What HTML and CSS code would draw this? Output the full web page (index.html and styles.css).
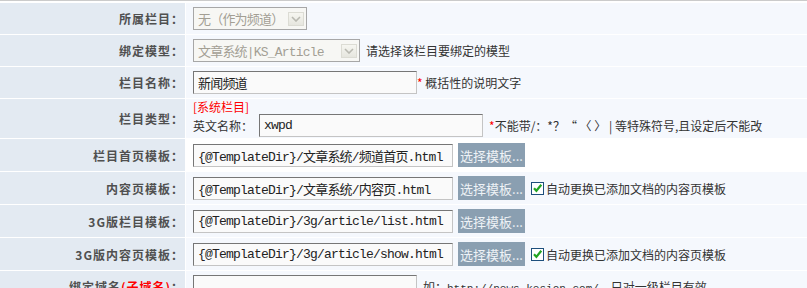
FILE: index.html
```html
<!DOCTYPE html>
<html>
<head>
  <meta charset="utf-8">
  <title>栏目设置</title>
  <link rel="stylesheet" href="styles.css">
</head>
<body>
  <div class="form-wrap">
    <table class="form-table">
      <tr>
        <th>所属栏目：</th>
        <td>
          <div class="field">
            <span class="select w-parent"><span class="select-text">无（作为频道）</span><span class="select-arrow"><svg width="10" height="6" viewBox="0 0 10 6"><path d="M1 1 L5 5 L9 1" fill="none" stroke="#b9b9b1" stroke-width="1.6"/></svg></span></span>
          </div>
        </td>
      </tr>
      <tr>
        <th>绑定模型：</th>
        <td>
          <div class="field">
            <span class="select w-model"><span class="select-text">文章系统|KS_Article</span><span class="select-arrow"><svg width="10" height="6" viewBox="0 0 10 6"><path d="M1 1 L5 5 L9 1" fill="none" stroke="#b9b9b1" stroke-width="1.6"/></svg></span></span>
            <span class="hint gap">请选择该栏目要绑定的模型</span>
          </div>
        </td>
      </tr>
      <tr>
        <th>栏目名称：</th>
        <td>
          <div class="field">
            <input class="text w-name" type="text" value="新闻频道">
            <span class="hint"><em class="req">*</em> 概括性的说明文字</span>
          </div>
        </td>
      </tr>
      <tr>
        <th>栏目类型：</th>
        <td class="type-cell">
          <div class="sys-tag">[系统栏目]</div>
          <div class="field">
            <span class="hint">英文名称：</span>
            <input class="text w-ename" type="text" value="xwpd">
            <span class="hint gap"><em class="req">*</em>不能带/：*？“ 〈 〉 | 等特殊符号,且设定后不能改</span>
          </div>
        </td>
      </tr>
      <tr class="row-hover">
        <th>栏目首页模板：</th>
        <td>
          <div class="field">
            <input class="text w-tpl" type="text" value="{@TemplateDir}/文章系统/频道首页.html">
            <button class="btn-pick" type="button">选择模板...</button>
          </div>
        </td>
      </tr>
      <tr>
        <th>内容页模板：</th>
        <td>
          <div class="field">
            <input class="text w-tpl" type="text" value="{@TemplateDir}/文章系统/内容页.html">
            <button class="btn-pick" type="button">选择模板...</button>
            <label class="check"><span class="check-box"><svg width="11" height="11" viewBox="0 0 11 11"><path d="M2 5.2 L4.4 7.8 L9.3 1.8" fill="none" stroke="#22a422" stroke-width="2.2"/></svg></span>自动更换已添加文档的内容页模板</label>
          </div>
        </td>
      </tr>
      <tr>
        <th>3G版栏目模板：</th>
        <td>
          <div class="field">
            <input class="text w-tpl" type="text" value="{@TemplateDir}/3g/article/list.html">
            <button class="btn-pick" type="button">选择模板...</button>
          </div>
        </td>
      </tr>
      <tr>
        <th>3G版内容页模板：</th>
        <td>
          <div class="field">
            <input class="text w-tpl" type="text" value="{@TemplateDir}/3g/article/show.html">
            <button class="btn-pick" type="button">选择模板...</button>
            <label class="check"><span class="check-box"><svg width="11" height="11" viewBox="0 0 11 11"><path d="M2 5.2 L4.4 7.8 L9.3 1.8" fill="none" stroke="#22a422" stroke-width="2.2"/></svg></span>自动更换已添加文档的内容页模板</label>
          </div>
        </td>
      </tr>
      <tr>
        <th>绑定域名<span class="red">(子域名)</span>：</th>
        <td>
          <div class="field">
            <input class="text w-name" type="text" value="">
            <span class="hint gap">如：<span class="mono">http://news.kesion.com/</span>，只对一级栏目有效</span>
          </div>
        </td>
      </tr>
    </table>
  </div>
</body>
</html>
```

FILE: styles.css
```css
body {
  margin: 0;
  font-family: "Noto Sans CJK SC", "Liberation Sans", sans-serif;
  font-size: 12px;
  color: #333;
  background: #fff;
}

.form-wrap {
  border-top: 1px solid #cbcbcb;
  padding-top: 2px;
}

.form-table {
  width: 100%;
  border-collapse: separate;
  border-spacing: 0;
}

.form-table th {
  width: 184px;
  padding: 0 1px 0 0;
  text-align: right;
  font-weight: bold;
  letter-spacing: 1px;
  color: #505050;
  background: #e3eaf2;
  border-right: 1px solid #fff;
  border-bottom: 1px solid #fff;
  white-space: nowrap;
}

.form-table td {
  padding: 4px 7px;
  background: #f5f8fd;
  border-bottom: 1px solid #fff;
  vertical-align: middle;
}

.form-table .row-hover td {
  background: #fff;
}

.form-table td.type-cell {
  padding: 1px 7px;
}

.field {
  display: flex;
  align-items: center;
  white-space: nowrap;
}

.sys-tag {
  color: #f00;
  line-height: 14px;
  font-size: 12px;
}

.red {
  color: #f00;
}

.hint {
  color: #333;
  font-size: 12px;
}

.gap {
  margin-left: 6px;
}

.req {
  font-style: normal;
  color: #f00;
}

.mono {
  font-family: "Liberation Mono", monospace;
  font-size: 11px;
}

/* disabled selects */
.select {
  display: inline-flex;
  align-items: center;
  justify-content: space-between;
  box-sizing: border-box;
  height: 23px;
  padding: 0 2px 0 4px;
  border: 1px solid #a7a7a7;
  background: #f7f7f4;
  color: #a39f94;
  font-family: "Liberation Mono", "Noto Sans CJK SC", monospace;
  font-size: 13px;
  letter-spacing: -0.8px;
}

.w-parent { width: 114px; }
.w-model { width: 167px; }

.select-arrow {
  display: flex;
  align-items: center;
  justify-content: center;
  box-sizing: border-box;
  width: 16px;
  height: 14px;
  border: 1px solid #dcdcd4;
  background: linear-gradient(#f6f6f1, #e6e6df);
}

input.text {
  box-sizing: border-box;
  height: 23px;
  margin: 0;
  padding: 0 4px;
  border: 1px solid;
  border-color: #767676 #c4c4c4 #c4c4c4 #767676;
  background: #fafafa;
  color: #222;
  font-family: "Liberation Mono", "Noto Sans CJK SC", monospace;
  font-size: 13px;
  letter-spacing: -0.8px;
  outline: none;
}

.w-name { width: 224px; }
.w-ename { width: 224px; margin-left: 6px !important; }
.w-tpl { width: 260px; }

.btn-pick {
  box-sizing: border-box;
  width: 67px;
  height: 24px;
  margin-left: 5px;
  padding: 0;
  border: 0;
  background: #8a9fb1;
  color: #eef2f6;
  font-family: "Noto Sans CJK SC", sans-serif;
  font-size: 13px;
  cursor: pointer;
}

.check {
  display: inline-flex;
  align-items: center;
  margin-left: 6px;
  font-size: 12px;
  color: #333;
}

.check-box {
  display: inline-flex;
  align-items: center;
  justify-content: center;
  box-sizing: border-box;
  width: 13px;
  height: 13px;
  margin-right: 2px;
  border: 1px solid #1d4f7c;
  background: #fff;
}
```
